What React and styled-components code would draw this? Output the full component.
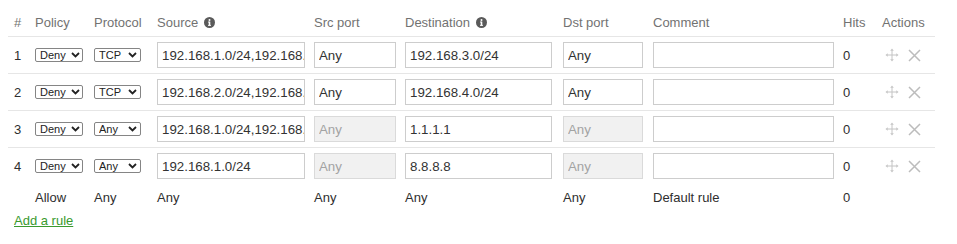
import React from 'react';
import styled, { createGlobalStyle } from 'styled-components';

const Global = createGlobalStyle`
  html, body { background: #fff; }
  body {
    margin: 8px;
    font-family: "Liberation Sans", Arial, Helvetica, sans-serif;
    color: #333;
  }
`;

const COLS = '21px 59px 63px 157px 91px 158px 90px 190px 39px 59px';

const Table = styled.div`
  width: 927px;
`;

const Row = styled.div`
  display: grid;
  grid-template-columns: ${COLS};
  align-items: center;
  height: ${(p) => p.$h}px;
  border-bottom: ${(p) => (p.$line ? '1px solid #e6e6e6' : '0')};
`;

const HeadCell = styled.div`
  padding-left: 6px;
  font-size: 13px;
  color: #727272;
  display: flex;
  align-items: center;
  gap: 6px;
  white-space: nowrap;
`;

const Cell = styled.div`
  padding-left: 6px;
  font-size: 13px;
  color: #2e2e2e;
  display: flex;
  align-items: center;
  white-space: nowrap;
`;

const SelectWrap = styled.div`
  position: relative;
  width: ${(p) => p.$w}px;
  height: 14px;
  display: flex;
`;

const Select = styled.select`
  appearance: none;
  -webkit-appearance: none;
  width: 100%;
  height: 14px;
  box-sizing: border-box;
  border: 1px solid #858585;
  border-radius: 2px;
  background: #fff;
  color: #222;
  font-family: "Liberation Sans", Arial, sans-serif;
  font-size: 11px;
  line-height: 12px;
  padding: 0 0 0 4px;
  margin: 0;
  outline: none;
`;

const Chevron = styled.svg`
  position: absolute;
  right: ${(p) => p.$r}px;
  top: 4px;
  pointer-events: none;
`;

const Input = styled.input`
  width: ${(p) => p.$w}px;
  height: 26px;
  box-sizing: border-box;
  border: 1px solid ${(p) => (p.disabled ? '#dadada' : '#cdcdcd')};
  background: ${(p) => (p.disabled ? '#f1f1f1' : '#fff')};
  color: ${(p) => (p.disabled ? '#a3a3a3' : '#333')};
  font-family: "Liberation Sans", Arial, sans-serif;
  font-size: 13.3px;
  padding: 0 0 0 4px;
  margin: 0;
  border-radius: 0;
  outline: none;
`;

const Actions = styled.div`
  padding-left: 9px;
  display: flex;
  align-items: center;
  gap: 9px;
`;

const AddLink = styled.a`
  display: inline-block;
  margin: 3px 0 0 6px;
  font-size: 13px;
  line-height: 16px;
  color: #3a9a2f;
  text-decoration: underline;
  cursor: pointer;
`;

const InfoIcon = () => (
  <svg width="11" height="11" viewBox="0 0 11 11">
    <circle cx="5.5" cy="5.5" r="5.5" fill="#5a5a5a" />
    <circle cx="5.5" cy="3" r="1" fill="#fff" />
    <rect x="4.7" y="4.6" width="1.6" height="4" fill="#fff" />
    <rect x="4" y="4.6" width="1.6" height="0.9" fill="#fff" />
    <rect x="4" y="7.9" width="3" height="0.9" fill="#fff" />
  </svg>
);

const MoveIcon = () => (
  <svg width="14" height="14" viewBox="0 0 14 14">
    <g stroke="#c4c4c4" strokeWidth="1" fill="none">
      <path d="M7 2.2 V11.8 M2.2 7 H11.8" />
    </g>
    <g fill="#c4c4c4">
      <path d="M7 0.5 L5.2 2.7 H8.8 Z" />
      <path d="M7 13.5 L5.2 11.3 H8.8 Z" />
      <path d="M0.5 7 L2.7 5.2 V8.8 Z" />
      <path d="M13.5 7 L11.3 5.2 V8.8 Z" />
    </g>
  </svg>
);

const CloseIcon = () => (
  <svg width="13" height="13" viewBox="0 0 13 13">
    <path d="M1 1 L12 12 M12 1 L1 12" stroke="#bcbcbc" strokeWidth="1.5" fill="none" />
  </svg>
);

const Dropdown = ({ w, value, options, r }) => (
  <SelectWrap $w={w}>
    <Select defaultValue={value}>
      {options.map((o) => (
        <option key={o}>{o}</option>
      ))}
    </Select>
    <Chevron $r={r} width="9" height="6" viewBox="0 0 9 6">
      <path d="M1 1 L4.5 4.5 L8 1" stroke="#222" strokeWidth="1.8" fill="none" />
    </Chevron>
  </SelectWrap>
);

const rules = [
  { id: 1, policy: 'Deny', proto: 'TCP', src: '192.168.1.0/24,192.168.5.0/24', sport: 'Any', dst: '192.168.3.0/24', dport: 'Any' },
  { id: 2, policy: 'Deny', proto: 'TCP', src: '192.168.2.0/24,192.168.6.0/24', sport: 'Any', dst: '192.168.4.0/24', dport: 'Any' },
  { id: 3, policy: 'Deny', proto: 'Any', src: '192.168.1.0/24,192.168.2.0/24', sport: 'Any', dst: '1.1.1.1', dport: 'Any' },
  { id: 4, policy: 'Deny', proto: 'Any', src: '192.168.1.0/24', sport: 'Any', dst: '8.8.8.8', dport: 'Any' },
];

export default function App() {
  return (
    <>
      <Global />
      <Table>
        <Row $h={28} $line>
          <HeadCell>#</HeadCell>
          <HeadCell>Policy</HeadCell>
          <HeadCell>Protocol</HeadCell>
          <HeadCell>
            Source <InfoIcon />
          </HeadCell>
          <HeadCell>Src port</HeadCell>
          <HeadCell>
            Destination <InfoIcon />
          </HeadCell>
          <HeadCell>Dst port</HeadCell>
          <HeadCell>Comment</HeadCell>
          <HeadCell>Hits</HeadCell>
          <HeadCell>Actions</HeadCell>
        </Row>
        {rules.map((r, i) => {
          const portsOff = r.proto === 'Any';
          return (
            <Row key={r.id} $h={36} $line={i < rules.length - 1}>
              <Cell>{r.id}</Cell>
              <Cell>
                <Dropdown w={48} value={r.policy} options={['Allow', 'Deny']} r={3} />
              </Cell>
              <Cell>
                <Dropdown w={47} value={r.proto} options={['TCP', 'UDP', 'ICMP', 'Any']} r={4} />
              </Cell>
              <Cell>
                <Input $w={148} defaultValue={r.src} />
              </Cell>
              <Cell>
                <Input $w={82} defaultValue={r.sport} disabled={portsOff} />
              </Cell>
              <Cell>
                <Input $w={147} defaultValue={r.dst} />
              </Cell>
              <Cell>
                <Input $w={80} defaultValue={r.dport} disabled={portsOff} />
              </Cell>
              <Cell>
                <Input $w={181} defaultValue="" />
              </Cell>
              <Cell>0</Cell>
              <Actions>
                <MoveIcon />
                <CloseIcon />
              </Actions>
            </Row>
          );
        })}
        <Row $h={26}>
          <Cell />
          <Cell>Allow</Cell>
          <Cell>Any</Cell>
          <Cell>Any</Cell>
          <Cell>Any</Cell>
          <Cell>Any</Cell>
          <Cell>Any</Cell>
          <Cell>Default rule</Cell>
          <Cell>0</Cell>
          <Cell />
        </Row>
      </Table>
      <AddLink>Add a rule</AddLink>
    </>
  );
}
